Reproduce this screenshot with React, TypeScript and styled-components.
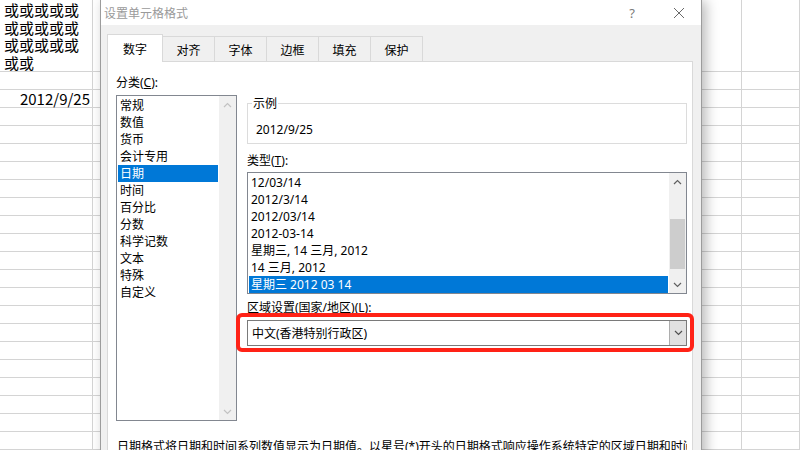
import styled, { createGlobalStyle } from "styled-components";

const GlobalStyle = createGlobalStyle`
  html, body {
    margin: 0;
    padding: 0;
  }
  body {
    width: 800px;
    height: 450px;
    overflow: hidden;
    background: #ffffff;
  }
`;

const UI_FONT = `"Noto Sans", "Noto Sans CJK SC", sans-serif`;

const categories = ["常规", "数值", "货币", "会计专用", "日期", "时间", "百分比", "分数", "科学记数", "文本", "特殊", "自定义"];
const types = ["12/03/14", "2012/3/14", "2012/03/14", "2012-03-14", "星期三, 14 三月, 2012", "14 三月, 2012", "星期三 2012 03 14"];
const tabs = ["数字", "对齐", "字体", "边框", "填充", "保护"];

const Page = styled.div`
  position: relative;
  width: 800px;
  height: 450px;
  overflow: hidden;
`;

/* spreadsheet behind the dialog */
const Sheet = styled.div`
  width: 800px;
  font-family: "Noto Sans CJK SC", sans-serif;
  font-size: 15px;
  color: #000;
`;

const SheetRow = styled.div<{ $h: number }>`
  display: grid;
  grid-template-columns: 93px 649px 1fr;
  height: ${(p) => p.$h}px;
`;

const Cell = styled.div<{ $right?: boolean }>`
  box-sizing: border-box;
  border-right: 1px solid #d4d4d4;
  border-bottom: 1px solid #d4d4d4;
  padding: ${(p) => (p.$right ? "0 2px 0 4px" : "1px 2px 0 4px")};
  line-height: ${(p) => (p.$right ? 17 : 17.5)}px;
  text-align: ${(p) => (p.$right ? "right" : "left")};
  overflow: ${(p) => (p.$right ? "visible" : "hidden")};
  white-space: ${(p) => (p.$right ? "nowrap" : "normal")};
  word-break: break-all;
`;

/* dialog */
const Dialog = styled.div`
  position: absolute;
  left: 100px;
  top: -1px;
  width: 602px;
  height: 480px;
  box-sizing: border-box;
  border: 1px solid #9c9c9c;
  background: #f0f0f0;
  box-shadow: 4px 2px 12px rgba(0, 0, 0, 0.28);
  display: flex;
  flex-direction: column;
  font-family: ${UI_FONT};
  font-size: 12px;
  color: #000;
`;

const TitleBar = styled.div`
  height: 25px;
  flex: none;
  background: #ffffff;
  display: flex;
  align-items: center;
  padding-left: 3px;
`;

const Title = styled.div`
  flex: 1;
  color: #9a9a9a;
  font-size: 12px;
`;

const HelpButton = styled.div`
  width: 30px;
  margin-right: 10px;
  text-align: center;
  color: #7a7a7a;
  font-size: 13px;
`;

const CloseButton = styled.div`
  width: 44px;
  display: flex;
  justify-content: center;
  align-items: center;
`;

const Body = styled.div`
  flex: 1;
  display: flex;
  flex-direction: column;
  padding: 9px 8px 0 6px;
`;

const TabStrip = styled.div`
  display: flex;
  align-items: flex-end;
  height: 27px;
  flex: none;
`;

const Tab = styled.div<{ $active?: boolean }>`
  box-sizing: border-box;
  width: ${(p) => (p.$active ? 56 : 53)}px;
  height: ${(p) => (p.$active ? 28 : 25)}px;
  margin-right: -1px;
  margin-bottom: ${(p) => (p.$active ? -1 : 0)}px;
  border: 1px solid #d9d9d9;
  border-bottom: none;
  background: ${(p) => (p.$active ? "#ffffff" : "#f0f0f0")};
  position: relative;
  z-index: ${(p) => (p.$active ? 2 : 1)};
  display: flex;
  align-items: center;
  justify-content: center;
  padding-top: ${(p) => (p.$active ? 0 : 1)}px;
`;

const Panel = styled.div`
  flex: 1;
  border: 1px solid #d9d9d9;
  background: #ffffff;
  padding: 12px 5px 0 8px;
`;

const Columns = styled.div`
  display: flex;
  gap: 10px;
`;

const LeftColumn = styled.div`
  width: 121px;
  flex: none;
  display: flex;
  flex-direction: column;
`;

const RightColumn = styled.div`
  flex: 1;
  display: flex;
  flex-direction: column;
  padding-top: 21px;
`;

const Label = styled.div<{ $gap?: number; $after?: number }>`
  line-height: 17px;
  margin-top: ${(p) => p.$gap ?? 0}px;
  margin-bottom: ${(p) => p.$after ?? 4}px;
  white-space: nowrap;
`;

const ListBox = styled.div<{ $h: number }>`
  box-sizing: border-box;
  height: ${(p) => p.$h}px;
  border: 1px solid #828790;
  display: flex;
  background: #ffffff;
`;

const Items = styled.div`
  flex: 1;
  padding: 1px 1px 0;
  overflow: hidden;
`;

const Item = styled.div<{ $selected?: boolean }>`
  height: 17px;
  line-height: 17px;
  padding-left: 2px;
  white-space: nowrap;
  background: ${(p) => (p.$selected ? "#0078d7" : "transparent")};
  color: ${(p) => (p.$selected ? "#ffffff" : "#000000")};
`;

const ScrollBar = styled.div`
  width: 17px;
  flex: none;
  background: #f0f0f0;
  display: flex;
  flex-direction: column;
`;

const ArrowButton = styled.div`
  height: 17px;
  flex: none;
  display: flex;
  align-items: center;
  justify-content: center;
`;

const Track = styled.div`
  flex: 1;
  display: flex;
  flex-direction: column;
  align-items: center;
`;

const Thumb = styled.div<{ $offset: number; $size: number }>`
  width: 15px;
  margin-top: ${(p) => p.$offset}px;
  height: ${(p) => p.$size}px;
  background: #cdcdcd;
`;

const GroupBox = styled.fieldset`
  margin: 0;
  padding: 0 8px 5px 4px;
  min-width: 0;
  border: 1px solid #dcdcdc;
`;

const GroupLegend = styled.legend`
  padding: 0 1px;
  line-height: 17px;
`;

const SampleValue = styled.div`
  margin-top: 9px;
  padding-left: 4px;
  line-height: 17px;
`;

const ComboWrap = styled.div`
  position: relative;
`;

const Combo = styled.div`
  box-sizing: border-box;
  height: 26px;
  border: 1px solid #7a7a7a;
  background: #ffffff;
  display: flex;
  align-items: stretch;
`;

const ComboText = styled.div`
  flex: 1;
  padding-left: 4px;
  display: flex;
  align-items: center;
`;

const DropButton = styled.div`
  width: 16px;
  background: #e1e1e1;
  border-left: 1px solid #adadad;
  display: flex;
  align-items: center;
  justify-content: center;
`;

const Annotation = styled.div`
  position: absolute;
  top: -7px;
  left: -11px;
  right: -7px;
  bottom: -6px;
  border: 4px solid #ff2216;
  border-radius: 6px;
  pointer-events: none;
`;

const Footnote = styled.div`
  margin-top: 17px;
  padding-left: 1px;
  line-height: 17px;
  white-space: nowrap;
  overflow: hidden;
`;

const Chevron = ({ up, color }: { up?: boolean; color: string }) => (
  <svg width="9" height="6" viewBox="0 0 9 6">
    <polyline
      points={up ? "1,5 4.5,1.5 8,5" : "1,1 4.5,4.5 8,1"}
      fill="none"
      stroke={color}
      strokeWidth="1.2"
    />
  </svg>
);

const CloseIcon = () => (
  <svg width="12" height="12" viewBox="0 0 12 12">
    <path d="M1 1 L11 11 M11 1 L1 11" stroke="#6a6a6a" strokeWidth="1" fill="none" />
  </svg>
);

export default function App() {
  const fillerRows = Array.from({ length: 19 });
  return (
    <Page>
      <GlobalStyle />
      <Sheet>
        <SheetRow $h={72}>
          <Cell>或或或或或或或或或或或或或或或或或</Cell>
          <Cell />
          <Cell />
        </SheetRow>
        <SheetRow $h={18}>
          <Cell />
          <Cell />
          <Cell />
        </SheetRow>
        <SheetRow $h={18}>
          <Cell $right>2012/9/25</Cell>
          <Cell />
          <Cell />
        </SheetRow>
        {fillerRows.map((_, i) => (
          <SheetRow $h={18} key={i}>
            <Cell />
            <Cell />
            <Cell />
          </SheetRow>
        ))}
      </Sheet>

      <Dialog>
        <TitleBar>
          <Title>设置单元格格式</Title>
          <HelpButton>?</HelpButton>
          <CloseButton>
            <CloseIcon />
          </CloseButton>
        </TitleBar>
        <Body>
          <TabStrip>
            {tabs.map((t, i) => (
              <Tab key={t} $active={i === 0}>
                {t}
              </Tab>
            ))}
          </TabStrip>
          <Panel>
            <Columns>
              <LeftColumn>
                <Label>
                  分类(<u>C</u>):
                </Label>
                <ListBox $h={326}>
                  <Items>
                    {categories.map((c) => (
                      <Item key={c} $selected={c === "日期"}>
                        {c}
                      </Item>
                    ))}
                  </Items>
                  <ScrollBar>
                    <ArrowButton>
                      <Chevron up color="#c2c2c2" />
                    </ArrowButton>
                    <Track />
                    <ArrowButton>
                      <Chevron color="#c2c2c2" />
                    </ArrowButton>
                  </ScrollBar>
                </ListBox>
              </LeftColumn>

              <RightColumn>
                <GroupBox>
                  <GroupLegend>示例</GroupLegend>
                  <SampleValue>2012/9/25</SampleValue>
                </GroupBox>
                <Label $gap={8} $after={3}>
                  类型(<u>T</u>):
                </Label>
                <ListBox $h={122}>
                  <Items>
                    {types.map((t, i) => (
                      <Item key={t} $selected={i === types.length - 1}>
                        {t}
                      </Item>
                    ))}
                  </Items>
                  <ScrollBar>
                    <ArrowButton>
                      <Chevron up color="#606060" />
                    </ArrowButton>
                    <Track>
                      <Thumb $offset={29} $size={50} />
                    </Track>
                    <ArrowButton>
                      <Chevron color="#606060" />
                    </ArrowButton>
                  </ScrollBar>
                </ListBox>
                <Label $gap={5} $after={4}>
                  区域设置(国家/地区)(<u>L</u>):
                </Label>
                <ComboWrap>
                  <Combo>
                    <ComboText>中文(香港特别行政区)</ComboText>
                    <DropButton>
                      <Chevron color="#505050" />
                    </DropButton>
                  </Combo>
                  <Annotation />
                </ComboWrap>
              </RightColumn>
            </Columns>
            <Footnote>
              日期格式将日期和时间系列数值显示为日期值。以星号(*)开头的日期格式响应操作系统特定的区域日期和时间设置的更改。
            </Footnote>
          </Panel>
        </Body>
      </Dialog>
    </Page>
  );
}
